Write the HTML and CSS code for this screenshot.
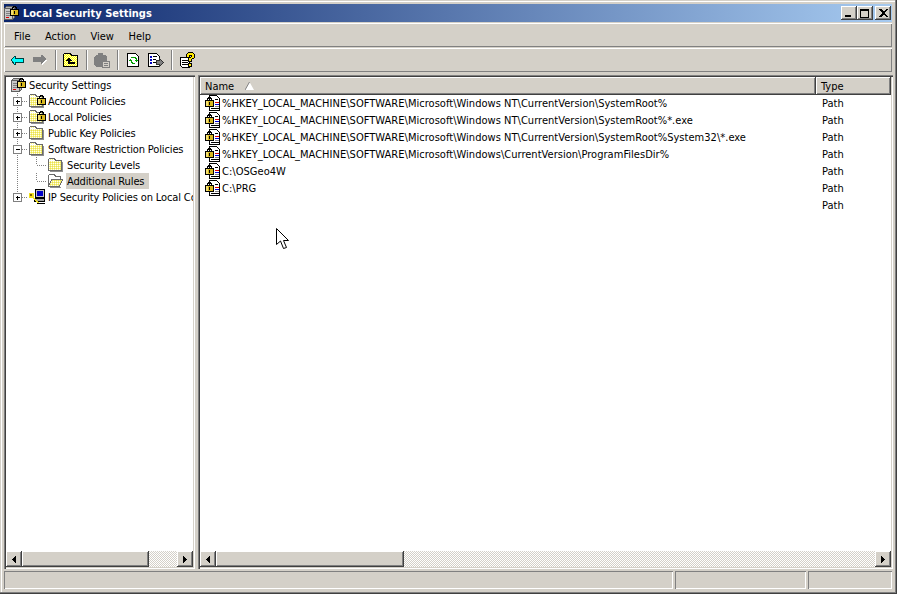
FILE: index.html
```html
<!DOCTYPE html>
<html>

<head>
	<meta charset="UTF-8">
	<title>Local Security Settings</title>
	<link rel="stylesheet" href="styles.css">
</head>

<body>
	<!-- shared icons -->
	<svg class="defs">
		<defs>
			<pattern id="dither" width="2" height="2" patternUnits="userSpaceOnUse">
				<rect width="2" height="2" fill="#f6f080"/>
				<rect width="1" height="1" fill="#fffff0"/>
				<rect x="1" y="1" width="1" height="1" fill="#e8e050"/>
			</pattern>
			<pattern id="dither-bright" width="2" height="2" patternUnits="userSpaceOnUse">
				<rect width="2" height="2" fill="#ffff00"/>
				<rect width="1" height="1" fill="#ffffc0"/>
				<rect x="1" y="1" width="1" height="1" fill="#ffffc0"/>
			</pattern>
			<g id="lock">
				<path d="M2.500 5V2.500h1v-1h2v1h1V5" fill="none" stroke="#000"/>
				<rect x="0.500" y="4.500" width="8" height="6" fill="#d8b820" stroke="#000"/>
				<rect x="1" y="5" width="2" height="5" fill="#f4e070"/>
				<rect x="4" y="6" width="1" height="3" fill="#000"/>
			</g>
			<g id="folder">
				<path d="M1.500 4.500V2.500l1-1h5l1 2h6v10h-13z" fill="url(#dither)" stroke="#6a6a6a"/>
				<path d="M2 3.500h6" stroke="#fff"/>
				<path d="M15.500 5v9.500H3" fill="none" stroke="#909090"/>
			</g>
			<symbol id="i-folder" viewBox="0 0 18 16"><use href="#folder"/></symbol>
			<symbol id="i-folder-lock" viewBox="0 0 18 16">
				<use href="#folder"/>
				<use href="#lock" x="9" y="1"/>
			</symbol>
			<symbol id="i-folder-open" viewBox="0 0 18 16">
				<path d="M1.500 13.500V2.500l1-1h5l1 2h5v3" fill="#fff" stroke="#6a6a6a"/>
				<path d="M1.500 13.500l3-7h11l-3 7z" fill="url(#dither)" stroke="#6a6a6a"/>
				<path d="M14 14.500h-11" stroke="#909090"/>
			</symbol>
			<symbol id="i-root" viewBox="0 0 16 16">
				<path d="M0.500 3.500l2-2h8v11l-2 2h-8z" fill="#b4b4b4" stroke="#606060"/>
				<path d="M1 4h7v10H1z" fill="#c8c8c8"/>
				<path d="M0.500 3.500h8v11M8.500 3.500l2-2" fill="none" stroke="#606060"/>
				<path d="M2 6.500h5M2 8.500h5M2 10.500h5" stroke="#808080"/>
				<rect x="2" y="12" width="3" height="1" fill="#e00000"/>
				<use href="#lock" x="6" y="0"/>
			</symbol>
			<symbol id="i-rule" viewBox="0 0 16 16">
				<path d="M4.500 0.500h7l3 3v12h-10z" fill="#fff" stroke="#000"/>
				<path d="M10 4.500h3" stroke="#000"/>
				<path d="M10 7.500h4" stroke="#e00000"/>
				<path d="M10 9.500h4" stroke="#0000e0"/>
				<path d="M10 11.500h4" stroke="#808080"/>
				<path d="M6 13.500h8" stroke="#000"/>
				<use href="#lock" x="0" y="1"/>
			</symbol>
			<symbol id="i-ipsec" viewBox="0 0 17 16">
				<rect x="6.500" y="0.500" width="9" height="8" fill="#c0c0c0" stroke="#000"/>
				<rect x="8" y="2" width="6" height="5" fill="#0000c8"/>
				<path d="M5.500 9.500h10v3h-10z" fill="#a0a0a0" stroke="#000"/>
				<path d="M8 14.500h8" stroke="#000"/>
				<rect x="0" y="4" width="5" height="5" fill="#f0e020"/>
				<path d="M4 8l6 6" stroke="#f0e020" stroke-width="2"/>
				<rect x="1" y="5" width="2" height="2" fill="#806000"/>
			</symbol>
		</defs>
	</svg>

	<div class="window">
		<div class="titlebar">
			<svg class="px title-icon" width="16" height="16"><use href="#i-root"/></svg>
			<span class="title">Local Security Settings</span>
			<div class="caption-buttons">
				<button class="caption-btn"><svg class="px" width="8" height="8"><rect x="0" y="6" width="6" height="2"/></svg></button>
				<button class="caption-btn"><svg class="px" width="10" height="9"><path d="M0.500 1.500h8v7h-8zM0 0.500h9" fill="none" stroke="#000"/></svg></button>
				<button class="caption-btn close-btn"><svg class="px" width="9" height="8" viewBox="0 0 9 8"><path d="M0 0h2l2 2 1 0 2-2h2L6 3.500v1L9 8H7L5 6H4L2 8H0l3-3.500v-1z"/></svg></button>
			</div>
		</div>

		<div class="menubar">
			<span class="menu-item">File</span>
			<span class="menu-item">Action</span>
			<span class="menu-item">View</span>
			<span class="menu-item">Help</span>
		</div>

		<div class="toolbar">
			<span class="tool"><svg class="px" width="13" height="9"><path d="M4.500 0.500v2h8v4h-8v2h-1l-3-4v-1l3-3z" fill="#00ffff" stroke="#004040"/></svg></span>
			<span class="tool"><svg class="px" width="14" height="10"><path d="M8 0h1l4 4v1l-4 4H8V7H0V2h8z" fill="#808080"/><path d="M9 9.500l4-4h1" stroke="#fff" fill="none"/></svg></span>
			<span class="tool-sep"></span>
			<span class="tool"><svg class="px" width="16" height="15"><path d="M0.500 4.500v-3l1-1h6l1 2h6v11h-14z" fill="url(#dither-bright)" stroke="#000"/><path d="M6 4l3 3.500H3z"/><rect x="5" y="7" width="2" height="3"/><rect x="5" y="9" width="7" height="2"/></svg></span>
			<span class="tool-sep"></span>
			<span class="tool"><svg class="px" width="16" height="15"><path d="M0 4l2-2h2V0h5v2h2l2 2v5H8v5H2l-2-2z" fill="#808080"/><rect x="8.500" y="8.500" width="7" height="6" fill="#d4d0c8" stroke="#808080"/><path d="M10 10.500h4M10 12.500h4" stroke="#808080"/></svg></span>
			<span class="tool-sep"></span>
			<span class="tool"><svg class="px" width="13" height="14"><path d="M0.500 0.500h8l3 3v10h-11z" fill="#fff" stroke="#000"/><path d="M4 4.500h4v1h1v1M8 10.500H5v-1H4V8" fill="none" stroke="#00a000"/><path d="M8 7h3l-1.500 2zM2 8h3L3.500 6z" fill="#00a000"/></svg></span>
			<span class="tool"><svg class="px" width="16" height="15"><path d="M0.500 0.500h8l3 3v10h-11z" fill="#fff" stroke="#000"/><path d="M2 3.500h2M2 6.500h2M2 9.500h2" stroke="#0000c0" stroke-width="2"/><path d="M5 3.500h4M5 6.500h3M5 9.500h3" stroke="#000"/><path d="M8.500 7.500h3v-2l4 4-4 4v-2h-3z" fill="#808080" stroke="#303030"/></svg></span>
			<span class="tool-sep"></span>
			<span class="tool"><svg class="px" width="15" height="16"><path d="M0.500 5.500h9v10h-7l-2-2z" fill="#fff" stroke="#000"/><path d="M2 8.500h6M2 10.500h6M2 12.500h6" stroke="#000"/><path d="M6.500 5.500v-3l2-2h4l2 2v3l-3 2v2h-3v-3l3-2V3h-2v2.500z" fill="#ffe800" stroke="#000"/><rect x="8.500" y="11.500" width="3" height="3" fill="#ffe800" stroke="#000"/></svg></span>
		</div>

		<div class="panes">
			<div class="pane tree-pane">
				<div class="tree">
					<div class="tree-row top-row">
						<svg class="px icon" width="16" height="16"><use href="#i-root"/></svg>
						<span class="label">Security Settings</span>
					</div>
					<div class="tree-row">
						<svg class="px gutter" width="22" height="16"><path d="M11.500 0v4M11.500 12v4M16 8.500h6" class="dots"/><rect x="7.500" y="4.500" width="8" height="8" class="box"/><path d="M9.500 8.500h4M11.500 6.500v4" stroke="#000"/></svg>
						<svg class="px icon-wide" width="18" height="16"><use href="#i-folder-lock"/></svg>
						<span class="label">Account Policies</span>
					</div>
					<div class="tree-row">
						<svg class="px gutter" width="22" height="16"><path d="M11.500 0v4M11.500 12v4M16 8.500h6" class="dots"/><rect x="7.500" y="4.500" width="8" height="8" class="box"/><path d="M9.500 8.500h4M11.500 6.500v4" stroke="#000"/></svg>
						<svg class="px icon-wide" width="18" height="16"><use href="#i-folder-lock"/></svg>
						<span class="label">Local Policies</span>
					</div>
					<div class="tree-row">
						<svg class="px gutter" width="22" height="16"><path d="M11.500 0v4M11.500 12v4M16 8.500h6" class="dots"/><rect x="7.500" y="4.500" width="8" height="8" class="box"/><path d="M9.500 8.500h4M11.500 6.500v4" stroke="#000"/></svg>
						<svg class="px icon-wide" width="18" height="16"><use href="#i-folder"/></svg>
						<span class="label">Public Key Policies</span>
					</div>
					<div class="tree-row">
						<svg class="px gutter" width="22" height="16"><path d="M11.500 0v4M11.500 12v4M16 8.500h6" class="dots"/><rect x="7.500" y="4.500" width="8" height="8" class="box"/><path d="M9.500 8.500h4" stroke="#000"/></svg>
						<svg class="px icon-wide" width="18" height="16"><use href="#i-folder"/></svg>
						<span class="label">Software Restriction Policies</span>
					</div>
					<div class="tree-row">
						<svg class="px gutter-deep" width="41" height="16"><path d="M11.500 0v16M30.500 0v8M31 8.500h10" class="dots"/></svg>
						<svg class="px icon-sub" width="18" height="16"><use href="#i-folder"/></svg>
						<span class="label">Security Levels</span>
					</div>
					<div class="tree-row">
						<svg class="px gutter-deep" width="41" height="16"><path d="M11.500 0v16M30.500 0v8M31 8.500h10" class="dots"/></svg>
						<svg class="px icon-sub" width="18" height="16"><use href="#i-folder-open"/></svg>
						<span class="label selected">Additional Rules</span>
					</div>
					<div class="tree-row">
						<svg class="px gutter" width="22" height="16"><path d="M11.500 0v4M16 8.500h6" class="dots"/><rect x="7.500" y="4.500" width="8" height="8" class="box"/><path d="M9.500 8.500h4M11.500 6.500v4" stroke="#000"/></svg>
						<svg class="px icon-wide" width="18" height="16"><use href="#i-ipsec"/></svg>
						<span class="label clipped">IP Security Policies on Local Computer</span>
					</div>
				</div>
				<div class="hscroll">
					<span class="sb-btn"><svg class="px" width="4" height="7"><path d="M4 0v7L0 3.500z"/></svg></span>
					<span class="sb-thumb tree-thumb"></span>
					<span class="sb-track"></span>
					<span class="sb-btn"><svg class="px" width="4" height="7"><path d="M0 0v7l4-3.500z"/></svg></span>
				</div>
			</div>

			<div class="pane list-pane">
				<div class="list-head">
					<div class="col-name">Name <svg class="sort-arrow" width="9" height="8"><path d="M4.500 0L9 8H0z" fill="#fff"/><path d="M4.500 0L0 8" stroke="#808080" fill="none"/></svg></div>
					<div class="col-type">Type</div>
				</div>
				<div class="list">
					<div class="list-row">
						<div class="cell-name"><svg class="px" width="16" height="16"><use href="#i-rule"/></svg><span>%HKEY_LOCAL_MACHINE\SOFTWARE\Microsoft\Windows NT\CurrentVersion\SystemRoot%</span></div>
						<div class="cell-type">Path</div>
					</div>
					<div class="list-row">
						<div class="cell-name"><svg class="px" width="16" height="16"><use href="#i-rule"/></svg><span>%HKEY_LOCAL_MACHINE\SOFTWARE\Microsoft\Windows NT\CurrentVersion\SystemRoot%*.exe</span></div>
						<div class="cell-type">Path</div>
					</div>
					<div class="list-row">
						<div class="cell-name"><svg class="px" width="16" height="16"><use href="#i-rule"/></svg><span>%HKEY_LOCAL_MACHINE\SOFTWARE\Microsoft\Windows NT\CurrentVersion\SystemRoot%System32\*.exe</span></div>
						<div class="cell-type">Path</div>
					</div>
					<div class="list-row">
						<div class="cell-name"><svg class="px" width="16" height="16"><use href="#i-rule"/></svg><span>%HKEY_LOCAL_MACHINE\SOFTWARE\Microsoft\Windows\CurrentVersion\ProgramFilesDir%</span></div>
						<div class="cell-type">Path</div>
					</div>
					<div class="list-row">
						<div class="cell-name"><svg class="px" width="16" height="16"><use href="#i-rule"/></svg><span>C:\OSGeo4W</span></div>
						<div class="cell-type">Path</div>
					</div>
					<div class="list-row">
						<div class="cell-name"><svg class="px" width="16" height="16"><use href="#i-rule"/></svg><span>C:\PRG</span></div>
						<div class="cell-type">Path</div>
					</div>
					<div class="list-row">
						<div class="cell-name"></div>
						<div class="cell-type">Path</div>
					</div>
				</div>
				<div class="hscroll">
					<span class="sb-btn"><svg class="px" width="4" height="7"><path d="M4 0v7L0 3.500z"/></svg></span>
					<span class="sb-thumb list-thumb"></span>
					<span class="sb-track"></span>
					<span class="sb-btn"><svg class="px" width="4" height="7"><path d="M0 0v7l4-3.500z"/></svg></span>
				</div>
			</div>
		</div>

		<div class="statusbar">
			<div class="status-cell status-main"></div>
			<div class="status-cell status-mid"></div>
			<div class="status-cell status-end"></div>
		</div>

		<!-- mouse pointer sits on top of the list -->
		<svg class="pointer" width="13" height="22" viewBox="0 0 13 22"><path d="M0.500 0.500V16.500L4.500 13l3 7.500 3-1-3-7h5z" fill="#fff" stroke="#000"/></svg>
	</div>
</body>

</html>
```

FILE: styles.css
```css
body {
	margin: 0;
	background-color: #d4d0c8;
	font-family: "DejaVu Sans Condensed", "DejaVu Sans", sans-serif;
	font-stretch: condensed;
	font-size: 11px;
	color: black;
}

.defs {
	position: absolute;
	width: 0;
	height: 0;
}

.px {
	shape-rendering: crispEdges;
	display: block;
	flex: none;
}

.window {
	position: relative;
	box-sizing: border-box;
	width: 897px;
	height: 594px;
	padding: 4px 4px 3px 4px;
	display: flex;
	flex-direction: column;
	background-color: #d4d0c8;
	box-shadow: inset -1px -1px #404040, inset -2px -2px #808080, inset 1px 1px #d4d0c8, inset 2px 2px #fff;
	overflow: hidden;
}

.titlebar {
	height: 18px;
	margin-right: 1px;
	display: flex;
	align-items: center;
	flex: none;
	background: linear-gradient(to right, #0a246a, #a6caf0);
	color: white;
}

.title-icon {
	margin: 0 3px 0 0;
}

.title {
	font-weight: bold;
	font-size: 11px;
	line-height: 16px;
	margin-top: 2px;
}

.caption-buttons {
	margin-left: auto;
	display: flex;
	padding-right: 1px;
}

.caption-btn {
	box-sizing: border-box;
	width: 16px;
	height: 14px;
	padding: 0;
	border: none;
	background-color: #d4d0c8;
	display: flex;
	align-items: center;
	justify-content: center;
	box-shadow: inset -1px -1px #404040, inset 1px 1px #fff, inset -2px -2px #808080;
}

.close-btn {
	margin-left: 2px;
}

.menubar {
	height: 24px;
	margin: 1px 1px 0 0;
	flex: none;
	display: flex;
	align-items: center;
	padding-left: 10px;
	box-sizing: border-box;
	box-shadow: inset 1px 1px #fff, inset -1px -1px #808080;
}

.menu-item {
	margin-right: 14.5px;
	padding-top: 2px;
}

.toolbar {
	height: 24px;
	margin: 1px 1px 0 0;
	flex: none;
	display: flex;
	align-items: center;
	padding-left: 1.5px;
	box-sizing: border-box;
	box-shadow: inset 1px 1px #fff, inset -1px -1px #808080;
}

.tool {
	width: 23px;
	height: 20px;
	display: flex;
	align-items: center;
	justify-content: center;
}

.tool-sep {
	width: 8px;
	height: 20px;
	background: linear-gradient(to right, #808080 1px, #fff 1px 2px, transparent 2px) 3px 0 no-repeat;
}

.panes {
	flex: 1;
	display: flex;
	gap: 3px;
	margin-top: 3px;
	min-height: 0;
}

.pane {
	box-sizing: border-box;
	padding: 2px;
	display: flex;
	flex-direction: column;
	background-color: white;
	box-shadow: inset 1px 1px #808080, inset 2px 2px #404040, inset -1px -1px #fff, inset -2px -2px #d4d0c8;
}

.tree-pane {
	width: 191px;
	flex: none;
}

.list-pane {
	flex: 1;
	min-width: 0;
}

.tree {
	flex: 1;
	overflow: hidden;
	white-space: nowrap;
}

.tree-row {
	height: 16px;
	display: flex;
	align-items: center;
}

.top-row {
	padding-left: 5px;
}

.top-row .label {
	margin-left: 2px;
	padding: 0;
}

.dots {
	stroke: #808080;
	stroke-dasharray: 1 1;
	fill: none;
}

.box {
	fill: white;
	stroke: #808080;
}

.label {
	margin-left: 1px;
	padding: 0 5px 0 1px;
	height: 16px;
	line-height: 18px;
	letter-spacing: -0.13px;
}

.clipped {
	overflow: hidden;
	padding-right: 0;
}

.selected {
	background-color: #d4d0c8;
}

.hscroll {
	height: 16px;
	flex: none;
	display: flex;
}

.sb-btn {
	box-sizing: border-box;
	width: 16px;
	flex: none;
	display: flex;
	align-items: center;
	justify-content: center;
	background-color: #d4d0c8;
	box-shadow: inset -1px -1px #404040, inset 1px 1px #fff, inset -2px -2px #808080;
}

.sb-thumb {
	background-color: #d4d0c8;
	flex: none;
	box-shadow: inset -1px -1px #404040, inset 1px 1px #fff, inset -2px -2px #808080;
}

.tree-thumb {
	width: 127px;
}

.list-thumb {
	width: 188px;
}

.sb-track {
	flex: 1;
	background: conic-gradient(#fff 25%, #d4d0c8 0 50%, #fff 0 75%, #d4d0c8 0) 0 0 / 2px 2px;
}

.list-head {
	height: 18px;
	flex: none;
	display: flex;
}

.col-name,
.col-type {
	box-sizing: border-box;
	height: 18px;
	line-height: 20px;
	background-color: #d4d0c8;
	box-shadow: inset -1px -1px #404040, inset 1px 1px #fff, inset -2px -2px #808080;
}

.col-name {
	width: 616px;
	padding-left: 5px;
}

.col-type {
	flex: 1;
	padding-left: 5px;
}

.sort-arrow {
	margin-left: 8px;
}

.list {
	flex: 1;
	overflow: hidden;
	white-space: nowrap;
}

.list-row {
	height: 17px;
	line-height: 17px;
	display: flex;
	align-items: flex-start;
}

.cell-name {
	width: 616px;
	padding-left: 5px;
	box-sizing: border-box;
	display: flex;
	gap: 1px;
	letter-spacing: 0.03px;
}

.cell-type {
	padding-left: 6px;
}

.statusbar {
	height: 18px;
	margin-top: 2px;
	margin-right: 1px;
	margin-bottom: 2px;
	flex: none;
	display: flex;
	gap: 2px;
}

.status-cell {
	box-sizing: border-box;
	box-shadow: inset 1px 1px #808080, inset -1px -1px #fff;
}

.status-main {
	width: 669px;
}

.status-mid {
	width: 131px;
}

.status-end {
	flex: 1;
}

.pointer {
	position: absolute;
	left: 276px;
	top: 228px;
}
```
